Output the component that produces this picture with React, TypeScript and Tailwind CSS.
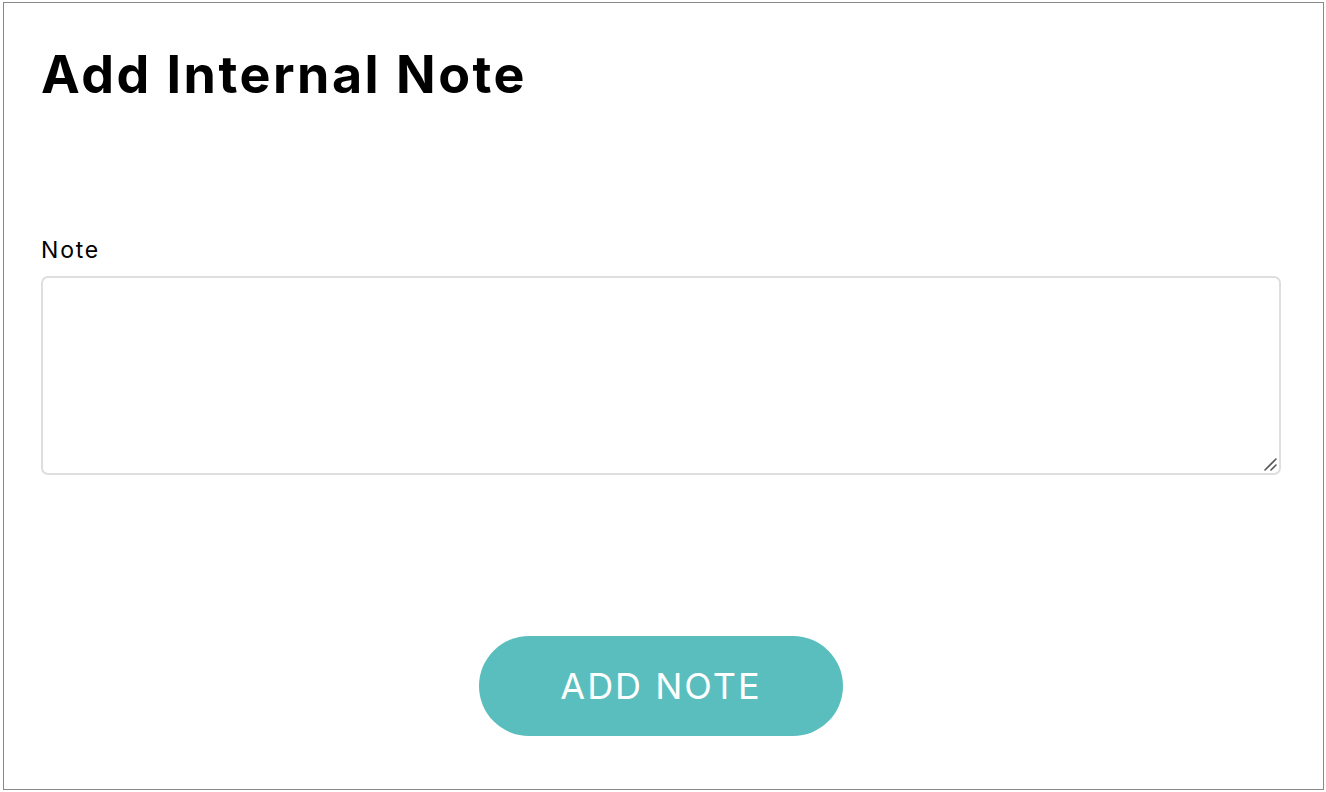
export default function App() {
  return (
    <div className="h-[792px] w-[1326px] bg-white pt-[2px] pl-[3px]" style={{ fontFamily: 'Inter, "Open Sans", sans-serif' }}>
      <div className="flex h-[788px] w-[1321px] flex-col border border-[#888] pl-[37px] pr-[42px]">
        <h1 className="mt-[42px] text-[52px] font-bold leading-[60px] tracking-[2.5px] text-black">Add Internal Note</h1>

        <label className="mt-[131px] text-[23px] font-normal leading-[28px] tracking-[1.8px] text-black">Note</label>
        <div className="relative mt-[12px]">
          <textarea className="block h-[199px] w-full resize-none rounded-[7px] border-2 border-[#dedede] px-3 py-2 text-[18px] outline-none" />
          <svg className="pointer-events-none absolute right-[4px] bottom-[4px]" width="14" height="14" viewBox="0 0 14 14">
            <path d="M2 13 L13 2 M8 13 L13 8" stroke="#555" strokeWidth="1.6" strokeLinecap="round" />
          </svg>
        </div>

        <div className="mt-[161px] flex justify-center">
          <button className="h-[100px] w-[364px] rounded-full bg-[#5abebe] text-[36px] tracking-[2px] text-white">
            ADD NOTE
          </button>
        </div>
      </div>
    </div>
  );
}
